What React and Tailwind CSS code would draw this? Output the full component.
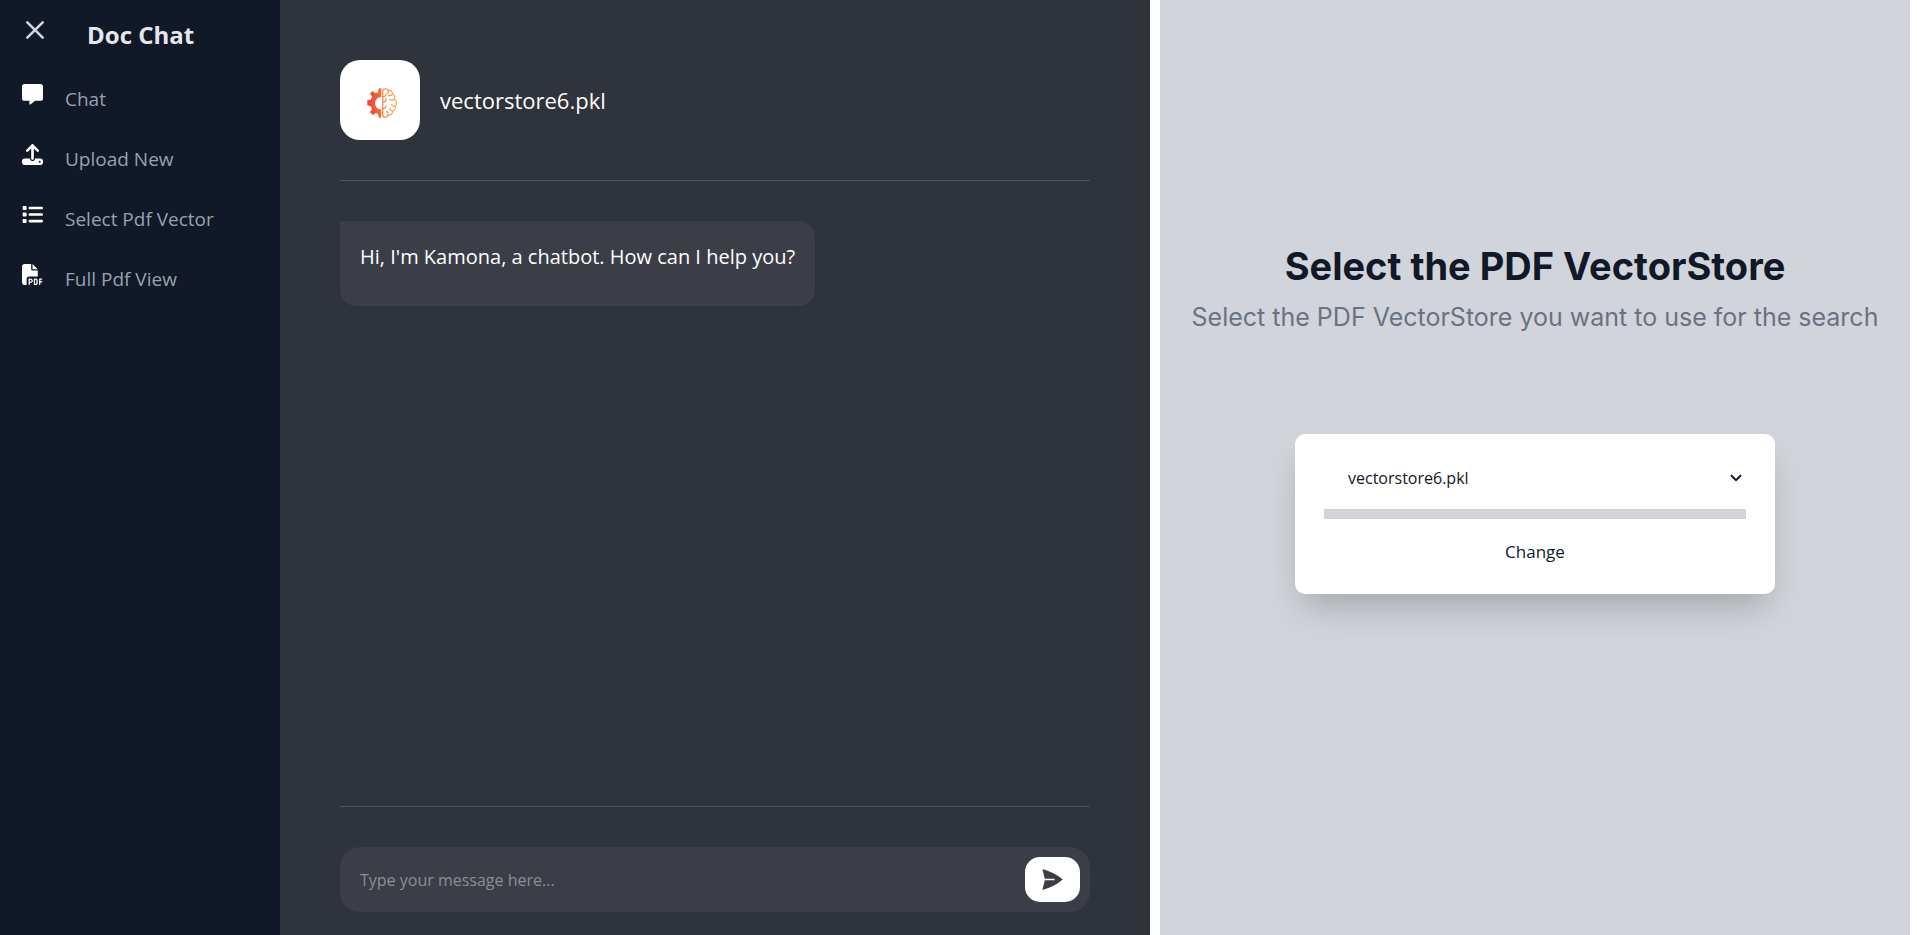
import React from "react";
import { FaFilePdf, FaList } from "react-icons/fa6";

function CloseIcon() {
  return (
    <svg viewBox="0 0 20 20" className="size-5" fill="none" stroke="currentColor" strokeWidth="2.6" strokeLinecap="round" aria-hidden="true">
      <path d="M2.300 2.300l15.400 15.400M17.700 2.300L2.300 17.700" />
    </svg>
  );
}

function ChatIcon() {
  return (
    <svg viewBox="0 0 21 21" className="size-[21px]" fill="currentColor" aria-hidden="true">
      <path d="M2.600 0h15.800A2.600 2.600 0 0 1 21 2.600v11.600a2.600 2.600 0 0 1-2.600 2.600h-5.200l-4.900 3.800c-.4.3-.9 0-.9-.5v-3.300H2.600A2.600 2.600 0 0 1 0 14.200V2.600A2.600 2.600 0 0 1 2.600 0z" />
    </svg>
  );
}

function UploadIcon() {
  return (
    <svg viewBox="0 0 512 512" className="size-[21px]" fill="currentColor" aria-hidden="true">
      <path d="M288 109.300V352c0 17.700-14.300 32-32 32s-32-14.300-32-32V109.300l-73.400 73.400c-12.500 12.500-32.800 12.500-45.300 0s-12.500-32.800 0-45.300l128-128c12.500-12.500 32.800-12.500 45.300 0l128 128c12.500 12.500 12.500 32.800 0 45.300s-32.800 12.500-45.300 0L288 109.300zM64 352h128c0 35.300 28.700 64 64 64s64-28.700 64-64h128c35.300 0 64 28.700 64 64v32c0 35.300-28.700 64-64 64H64c-35.300 0-64-28.700-64-64v-32c0-35.300 28.700-64 64-64zm368 104a24 24 0 1 0 0-48 24 24 0 1 0 0 48z" />
    </svg>
  );
}

function GearBrain() {
  return (
    <svg viewBox="0 0 30 30" className="size-[30px]" aria-hidden="true">
      <defs>
        <linearGradient id="gear" x1="0" x2="30" y1="0" y2="0" gradientUnits="userSpaceOnUse">
          <stop offset="0" stopColor="#ef4136" />
          <stop offset="0.5" stopColor="#f7703a" />
          <stop offset="1" stopColor="#fbae4a" />
        </linearGradient>
      </defs>
      <path
        fill="url(#gear)"
        d="M14.300 0.300H11.800L11 4.200 8.600 5.200 5.600 3 3 5.600 5 8.800 3.900 11.500 0.300 12.300V17.300L3.900 18.200 5 20.900 3 24.200 5.800 27 9 25 11 25.900 11.800 29.700H14.300V21.500A6.200 6.200 0 0 1 14.300 9Z"
      />
      <g fill="none" stroke="url(#gear)" strokeWidth="1.1" strokeLinejoin="round" strokeLinecap="round">
        <path d="M15.800 2.500C17 .2 20.200.2 21 2.300 23.500 1.800 25.800 3.600 25.400 6 27.600 6.800 28.400 9 27.300 11 29.900 12.500 30.200 16.200 28.300 18 29 20.600 27.500 22.600 25.600 23 25.600 26 23.300 27.600 20.800 27.200 19.800 29.900 16.600 30 15.800 27.500Z" />
        <path d="M15.800 8.500C17.500 8.700 19 7.600 19.200 6M21 2.300C21.800 3.600 21.300 5 20.300 5.600M25.400 6C24.800 7.500 23.200 8 21.800 7.600M27.300 11C25.800 12.600 23.500 12.400 22.400 11M15.800 14C18 14.200 19.300 12.400 18.800 10.600M28.300 18C26.800 18.600 25 17.900 24.500 16.300M15.800 20.500C17.500 20.500 18.900 19.600 19 17.800M25.600 23C23.900 23 22.700 21.800 22.900 20.200M20.800 27.200C21.500 25.700 21 24 19.500 23.600" />
      </g>
    </svg>
  );
}

const navItems = [
  { label: "Chat", icon: <ChatIcon /> },
  { label: "Upload New", icon: <UploadIcon /> },
  { label: "Select Pdf Vector", icon: <FaList className="size-[21px]" /> },
  { label: "Full Pdf View", icon: <FaFilePdf className="size-[21px]" /> },
];

function Sidebar() {
  return (
    <aside className="w-[280px] shrink-0 bg-[#111827] px-[22px] pt-[19px]">
      <div className="flex items-start">
        <button type="button" aria-label="Close menu" className="ml-[3px] pt-px text-gray-300">
          <CloseIcon />
        </button>
        <h1 className="ml-[42px] text-[24px] leading-8 font-bold text-gray-200">Doc Chat</h1>
      </div>
      <nav className="mt-[17px]">
        <ul>
          {navItems.map((item) => (
            <li key={item.label} className="h-[60px] pt-4">
              <a href="#" className="flex items-start gap-[22px] text-white">
                {item.icon}
                <span className="pt-[3px] text-[19px] leading-6 text-gray-400">{item.label}</span>
              </a>
            </li>
          ))}
        </ul>
      </nav>
    </aside>
  );
}

function ChatPanel() {
  return (
    <main className="flex min-w-0 flex-1 flex-col bg-[#2f333c] px-[60px] pt-[60px] pb-[23px]">
      <header className="flex items-center gap-5 border-b border-[#4d525d] pb-10">
        <div className="flex size-20 items-center justify-center rounded-[20px] bg-white pt-1.5 pl-1">
          <GearBrain />
        </div>
        <h2 className="text-[22px] leading-8 font-medium text-white">vectorstore6.pkl</h2>
      </header>
      <section className="flex-1 pt-10">
        <p className="w-fit rounded-[16px] rounded-tl-none bg-[#3b3e46] px-5 pt-6 pb-[37px] text-[20px] leading-6 text-white">
          Hi, I'm Kamona, a chatbot. How can I help you?
        </p>
      </section>
      <form className="border-t border-[#4d525d] pt-10" onSubmit={(e) => e.preventDefault()}>
        <div className="flex items-center rounded-[20px] bg-[#3b3e46] p-2.5 pl-5">
          <input
            type="text"
            aria-label="Message"
            placeholder="Type your message here..."
            className="min-w-0 flex-1 bg-transparent text-[16px] text-white outline-none placeholder:text-[#8d8e90]"
          />
          <button type="submit" aria-label="Send" className="flex h-[45px] w-[55px] items-center justify-center rounded-[15px] bg-white text-[#3b3e46]">
            <svg viewBox="0 0 21 21" className="size-[21px]" fill="currentColor" aria-hidden="true">
              <path d="M.5.800C.3.300.8.100 1.200.200 8 2.200 15 5.500 20.800 10.500 15 15.500 8 18.800 1.200 20.800.8 20.900.3 20.700.5 20.200L2.800 11.300H12.500V9.700H2.800Z" />
            </svg>
          </button>
        </div>
      </form>
    </main>
  );
}

function VectorPanel() {
  return (
    <section className="flex w-[750px] shrink-0 flex-col items-center bg-[#d1d5db] pt-[240px] text-[#111827]">
      <h2 className="font-['Inter',sans-serif] text-[38px] leading-[52px] font-bold">Select the PDF VectorStore</h2>
      <p className="mt-[5px] font-['Inter',sans-serif] text-[25px] leading-10 text-[#6b7280]">
        Select the PDF VectorStore you want to use for the search
      </p>
      <form
        className="mt-[97px] flex w-[480px] flex-col rounded-[10px] bg-white px-[29px] pt-6 pb-5 shadow-[0_20px_35px_-8px_rgba(0,0,0,0.22)]"
        onSubmit={(e) => e.preventDefault()}
      >
        <div className="grid items-center border-b-10 border-[#d1d5db] pb-[11px]">
          <select aria-label="PDF VectorStore" className="col-start-1 row-start-1 h-10 w-full appearance-none bg-white pl-6 text-[16px]">
            <option>vectorstore6.pkl</option>
          </select>
          <svg viewBox="0 0 12 8" className="pointer-events-none col-start-1 row-start-1 mr-1 h-2 w-3 justify-self-end" fill="none" stroke="currentColor" strokeWidth="2" aria-hidden="true">
            <path d="M1 1.200l5 5 5-5" />
          </svg>
        </div>
        <button type="submit" className="mt-[11px] h-11 text-[17px]">Change</button>
      </form>
    </section>
  );
}

export default function App() {
  return (
    <div className="flex min-h-screen bg-white pr-[7px] font-['Open_Sans','Noto_Sans',sans-serif]">
      <Sidebar />
      <ChatPanel />
      <div className="w-2.5 shrink-0 bg-white" />
      <VectorPanel />
    </div>
  );
}
